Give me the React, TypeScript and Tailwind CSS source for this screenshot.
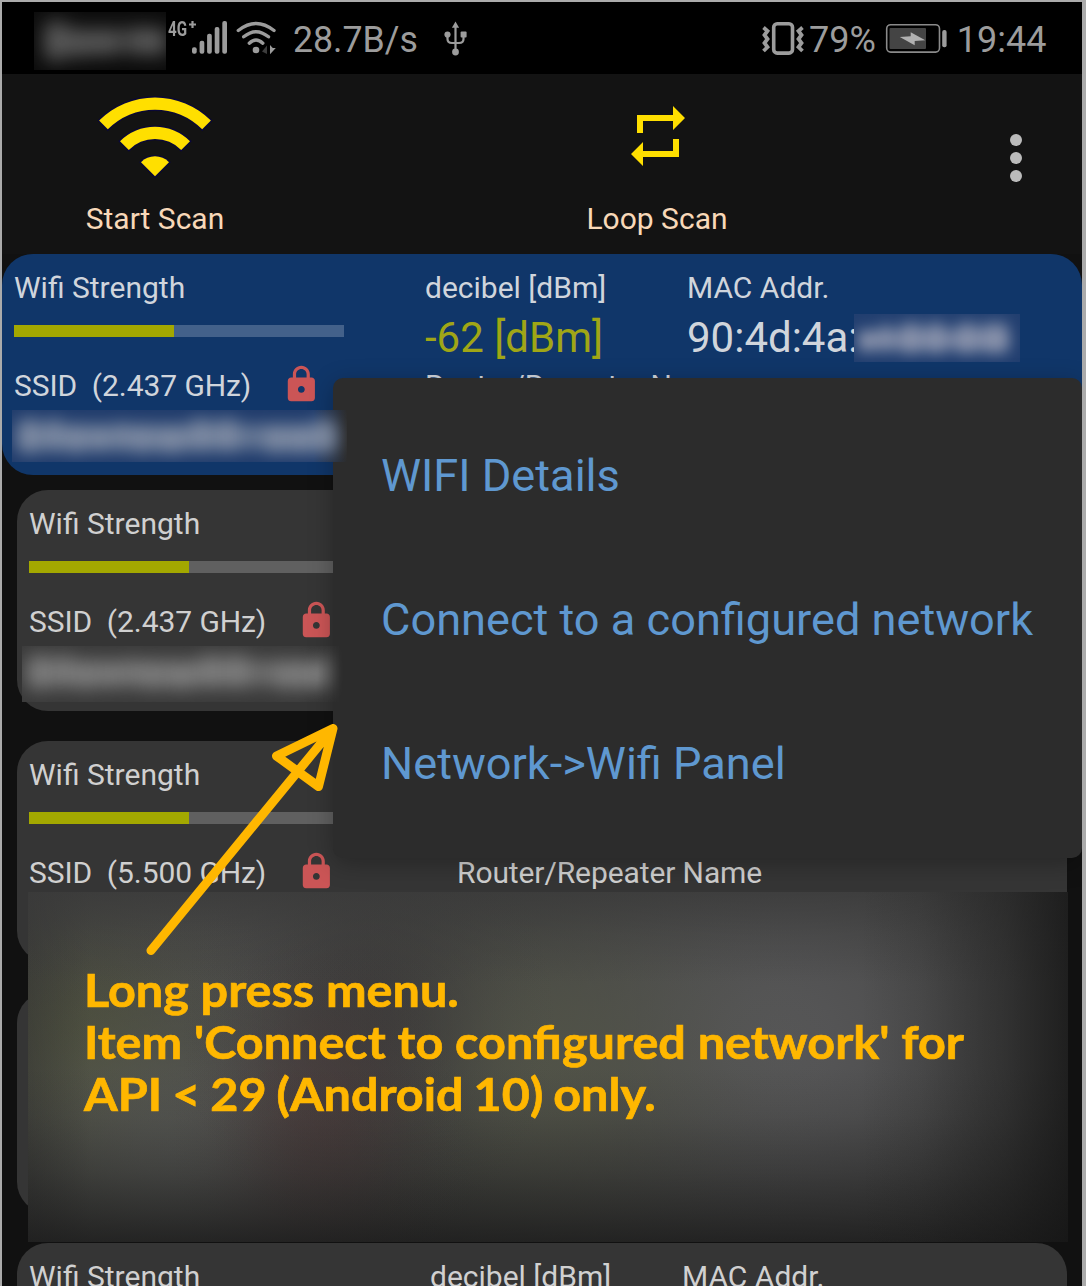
import React from "react";

type Blob = [x: number, y: number, w: number, h: number];

const NAME_BLOBS: Blob[] = [
  [4, 14, 322, 26], [6, 8, 22, 36], [34, 8, 16, 34], [54, 16, 20, 28], [78, 18, 20, 24], [104, 12, 12, 30],
  [120, 16, 20, 28], [144, 18, 30, 26], [178, 8, 22, 34], [204, 8, 22, 34], [254, 16, 20, 28],
  [276, 16, 24, 28], [302, 8, 20, 36],
];
const MAC_BLOBS: Blob[] = [
  [4, 16, 152, 20], [4, 16, 18, 22], [26, 10, 12, 28], [46, 8, 22, 32], [72, 8, 20, 32], [102, 8, 22, 32], [128, 8, 26, 32],
];
const CARRIER_BLOBS: Blob[] = [
  [10, 16, 128, 26], [10, 8, 24, 42], [38, 20, 18, 26], [60, 20, 20, 24], [100, 14, 14, 30], [116, 16, 18, 28],
];

function Smudge({ blobs, blur, className }: { blobs: Blob[]; blur: number; className: string }) {
  return (
    <div className={"shrink-0 overflow-hidden " + className}>
      <svg width="100%" height="100%" fill="currentColor" fillOpacity=".62" style={{ filter: `blur(${blur}px)` }}>
        {blobs.map(([x, y, w, h], i) => (
          <rect key={i} x={x} y={y} width={w} height={h} rx="5" />
        ))}
      </svg>
    </div>
  );
}

function StatusBar() {
  return (
    <div className="relative flex h-[72px] shrink-0 items-center bg-black text-[36px] leading-[42px] text-[#9c9c9c]">
      <Smudge blobs={CARRIER_BLOBS} blur={9} className="ml-8 mt-[5px] h-[58px] w-[132px] bg-[#0c0c0c] text-[#666]" />
      <span className="mb-[19px] ml-[2px] flex h-5 w-[22px] items-start text-[20px] font-bold leading-5">
        <span className="origin-left scale-x-[.76]">4G</span>
      </span>
      <svg width="281" height="72" viewBox="190 2 281 72" className="shrink-0 overflow-visible" fill="#9c9c9c">
        <path d="M189 24.500h7M192.500 21v7" stroke="#9c9c9c" strokeWidth="2.200" />
        <rect x="192" y="47.300" width="4.700" height="6.400" rx="2" />
        <rect x="199.600" y="40.700" width="4.700" height="13" rx="2" />
        <rect x="207.100" y="33.700" width="4.700" height="20" rx="2" />
        <rect x="214.700" y="27" width="4.700" height="26.700" rx="2" />
        <rect x="222.300" y="21" width="4.700" height="32.700" rx="2" />
        <g fill="none" stroke="#9c9c9c" strokeWidth="3.400" strokeLinecap="round">
          <path d="M238.300 30.500Q256 16.500 274 30.500" />
          <path d="M243.700 36.800Q256 26.500 268.500 36.800" />
          <path d="M249.300 43.200Q256 36.800 262.800 43.200" />
        </g>
        <circle cx="256" cy="50" r="3.300" />
        <path d="M262 51.500L267 45.500V54M262 51.500h6" fill="#3c3c3c" />
        <path d="M270 45v9.300l5.800-6.300h-3z" />
        <text x="293" y="52" fontSize="36" textLength="125" lengthAdjust="spacingAndGlyphs">28.7B/s</text>
        <g fill="none" stroke="#9c9c9c" strokeWidth="2.200">
          <path d="M455.500 25V51M447.500 35v4q0 4 4.500 4h7q4.500 0 4.500-4v-4" />
        </g>
        <path d="M455.500 21.500l3.600 6.200h-7.200z" />
        <circle cx="455.500" cy="52" r="3.400" />
        <circle cx="447.500" cy="34.500" r="3.100" />
        <rect x="460.600" y="31.500" width="6" height="6" rx="1" />
      </svg>
      <svg width="46" height="40" viewBox="760 18 46 40" className="ml-[289px] shrink-0" fill="none" stroke="#9c9c9c" strokeWidth="3.600">
        <rect x="773.700" y="23.700" width="18.800" height="29.400" rx="3.500" />
        <path d="M763.500 27.500l4 3.500-3 4 3 4-3 4 3 4-4 4M802.500 27.500l-4 3.500 3 4-3 4 3 4-3 4 4 4" strokeWidth="3.800" />
      </svg>
      <span className="ml-[3px] mt-[4px]">79%</span>
      <svg width="64" height="32" viewBox="885 22 64 32" className="ml-auto mr-[8px] shrink-0">
        <rect x="886.700" y="24.700" width="52.800" height="27.400" rx="4" fill="none" stroke="#8a8a8a" strokeWidth="1.600" />
        <rect x="889.500" y="28" width="36.500" height="21" rx="1" fill="#444" />
        <path d="M899.800 37l10.900-.8v-4l14.600 8-10.600.7v4.300z" fill="#b0b0b0" />
        <rect x="942.200" y="30" width="4.400" height="17.300" rx="2" fill="#9c9c9c" />
      </svg>
      <span className="mr-[35.500px] mt-[4px]">19:44</span>
    </div>
  );
}

function Toolbar() {
  return (
    <div className="flex h-[180px] shrink-0 bg-[#131313] text-[30px] leading-[35px] text-[#f8d8b8]">
      <div className="flex w-[306px] flex-col items-center">
        <svg width="120" height="90" viewBox="-60 -82 120 90" className="mt-5" fill="#ffdf00" stroke="#0a0838" strokeWidth="2.600" paintOrder="stroke">
          <path d="M-55.900-55.400A79 79 0 0 1 55.900-55.400L47.200-46.700A66.500 66.500 0 0 0-47.200-46.700Z" />
          <path d="M-35-34.800A49.500 49.500 0 0 1 35-34.800L26.200-26A36.500 36.500 0 0 0-26.200-26Z" />
          <path d="M-14-13.800A19.600 19.600 0 0 1 14-13.800L0 .3Z" />
        </svg>
        <span className="mt-[17px]">Start Scan</span>
      </div>
      <div className="ml-[196px] flex w-[306px] flex-col items-center">
        <svg width="72" height="72" viewBox="0 0 24 24" className="ml-0.5 mt-[26px]" fill="#ffdf00">
          <path d="M7 7h10v3l4-4-4-4v3H5v6h2V7zm10 10H7v-3l-4 4 4 4v-3h12v-6h-2v4z" />
        </svg>
        <span className="mt-[29px]">Loop Scan</span>
      </div>
      <div className="ml-auto mr-[60px] mt-[60px] flex flex-col gap-1.5">
        <i className="size-3 rounded-full bg-[#bbb]" />
        <i className="size-3 rounded-full bg-[#bbb]" />
        <i className="size-3 rounded-full bg-[#bbb]" />
      </div>
    </div>
  );
}

interface CardProps {
  freq?: string;
  active?: boolean;
  headings?: boolean;
  router?: string;
  smudge?: React.ReactNode;
}

function NetworkCard({ freq, active = false, headings = false, router, smudge }: CardProps) {
  return (
    <section
      className={
        "relative h-[221px] shrink-0 rounded-[31px] pl-3 pt-4 text-[30px] leading-[35px] " +
        (active ? "bg-[#103669] text-[#d0d5dc]" : "mx-[15px] bg-[#353535] text-[#d0d0d0]")
      }
    >
      <div className={"grid grid-rows-[35px_63px_35px] " + (active ? "grid-cols-[411px_262px_1fr]" : "grid-cols-[401px_252px_1fr]")}>
        <span>Wifi Strength</span>
        <span>{headings && "decibel [dBm]"}</span>
        <span>{headings && "MAC Addr."}</span>
        <div className={"mt-5 h-3 w-[330px] " + (active ? "bg-[#43618a]" : "bg-[#606060]")}>
          <div className="h-full w-40 bg-[#a3a800]" />
        </div>
        <span className="mt-2 text-[42px] leading-[49px] text-[#a0a616]">{active && "-62 [dBm]"}</span>
        <div className="mt-2 flex text-[42px] leading-[49px]">
          {active && (
            <>
              <span className="w-[167px] shrink-0">90:4d:4a:</span>
              <Smudge blobs={MAC_BLOBS} blur={7} className="relative mt-px h-12 w-[166px] bg-[#223f70] text-[#99a0b5]" />
            </>
          )}
        </div>
        {freq && (
          <div className="flex">
            <span className="w-[267px] whitespace-pre tracking-[-0.08px]">SSID  ({freq} GHz)</span>
            <svg width="40.700" height="40.700" viewBox="0 0 24 24" className="-mt-1 shrink-0" fill="#cb5556">
              <path d="M18 8h-1V6c0-2.760-2.240-5-5-5S7 3.240 7 6v2H6c-1.100 0-2 .9-2 2v10c0 1.100.9 2 2 2h12c1.100 0 2-.9 2-2V10c0-1.100-.9-2-2-2zm-6 9c-1.100 0-2-.9-2-2s.9-2 2-2 2 .9 2 2-.9 2-2 2zm3.100-9H8.900V6c0-1.710 1.390-3.100 3.100-3.100 1.710 0 3.100 1.390 3.100 3.100v2z" />
            </svg>
          </div>
        )}
        {router && <span className={"whitespace-nowrap tracking-[-0.1px] " + (active ? "" : "ml-[27px]")}>{router}</span>}
      </div>
      {smudge}
    </section>
  );
}

function PopupMenu() {
  return (
    <div className="absolute left-[331px] top-[376px] h-[480px] w-[749px] rounded-[10px] bg-[#2c2c2c] pl-12 pt-[26px] text-[45.150px] text-[#5f98d0] shadow-[0_6px_24px_rgba(0,0,0,.28)]">
      {["WIFI Details", "Connect to a configured network", "Network->Wifi Panel"].map((label) => (
        <div key={label} className="flex h-36 items-center whitespace-nowrap">{label}</div>
      ))}
    </div>
  );
}

/** Radial glow whose opacity falls off along a bell curve. */
function glow(x: number, y: number, rx: number, ry: number, rgb: string, alpha: number) {
  const stops = [1, 0.94, 0.8, 0.6, 0.4, 0.23, 0.11, 0.04, 0]
    .map((k, i) => `rgba(${rgb},${(k * alpha).toFixed(3)}) ${(i * 12.5).toFixed(1)}%`)
    .join(",");
  return `radial-gradient(ellipse ${rx}px ${ry}px at ${x}px ${y}px, ${stops})`;
}

const HAZE = [
  "linear-gradient(to right, rgba(20,20,20,0) 80%, rgba(20,20,20,.1) 86%, rgba(20,20,20,.4) 94%, rgba(20,20,20,.75) 100%)",
  "linear-gradient(to bottom, rgba(26,26,26,0) 50%, rgba(26,26,26,.1) 64%, rgba(26,26,26,.35) 80%, rgba(26,26,26,.6) 92%, rgba(26,26,26,.8) 100%)",
  "linear-gradient(to bottom, rgba(58,58,58,.75) 0%, rgba(58,58,58,.3) 12%, rgba(58,58,58,0) 26%)",
  "linear-gradient(to right, rgba(50,50,50,.45) 0%, rgba(50,50,50,0) 6%)",
  glow(290, 240, 150, 200, "78,58,58", 0.55),
  glow(340, 130, 190, 230, "58,56,56", 0.75),
  glow(150, 260, 300, 240, "92,93,90", 0.8),
  glow(50, 170, 220, 220, "78,82,54", 0.7),
  glow(510, 180, 300, 290, "82,84,72", 0.9),
  glow(750, 150, 440, 400, "86,86,87", 1),
  glow(180, 60, 340, 220, "76,76,74", 0.9),
].join(",");

export default function App() {
  return (
    <div className="h-[1286px] w-[1086px] overflow-hidden bg-[#ababab] pl-[2px] pr-1 pt-[2px] font-['Roboto',sans-serif]">
      <main className="relative flex h-[1284px] flex-col overflow-hidden bg-[#111]">
        <StatusBar />
        <Toolbar />
        <NetworkCard
          active
          headings
          freq="2.437"
          router="Router/Repeater N"
          smudge={<Smudge blobs={NAME_BLOBS} blur={8} className="absolute left-[10px] top-[156px] z-10 h-[52px] w-[335px] bg-[linear-gradient(to_right,#203c6c_90%,#2c2c2c)] text-[#8d97ab]" />}
        />
        <div className="mt-[15px] flex flex-col gap-[30px]">
          <NetworkCard
            freq="2.437"
            smudge={<Smudge blobs={NAME_BLOBS} blur={9} className="absolute left-[5px] top-[156px] z-10 h-14 w-[321px] bg-[linear-gradient(to_right,#3a3a3a_86%,#2c2c2c)] text-[#8a8a8a] [mask-image:linear-gradient(to_right,#000_92%,transparent)]" />}
          />
          <NetworkCard freq="5.500" router="Router/Repeater Name" />
          <section className="mx-[15px] h-[221px] shrink-0 rounded-[31px] bg-[#353535]" />
          <NetworkCard headings />
        </div>
        <PopupMenu />
        <div className="absolute left-[26px] top-[890px] h-[350px] w-[1040px] bg-[#3c3c3b]" style={{ backgroundImage: HAZE }} />
        <svg width="220" height="250" viewBox="130 710 220 250" className="absolute left-[128px] top-[708px]" fill="none" stroke="#ffb700" strokeWidth="9" strokeLinecap="round" strokeLinejoin="round">
          <path d="M151 950.500L333 728.500L276.500 756L318.500 786.500L333 728.500" />
        </svg>
        <div className="absolute left-[82px] top-[962px] origin-left scale-x-[1.055] whitespace-nowrap font-['Lato',sans-serif] text-[46px] font-bold leading-[52px] text-[#ffb700] [-webkit-text-stroke:0.7px_#ffb700]">
          <p>Long press menu.</p>
          <p>Item 'Connect to configured network' for</p>
          <p className="[word-spacing:-1.700px]">API &lt; 29 (Android 10) only.</p>
        </div>
      </main>
    </div>
  );
}
